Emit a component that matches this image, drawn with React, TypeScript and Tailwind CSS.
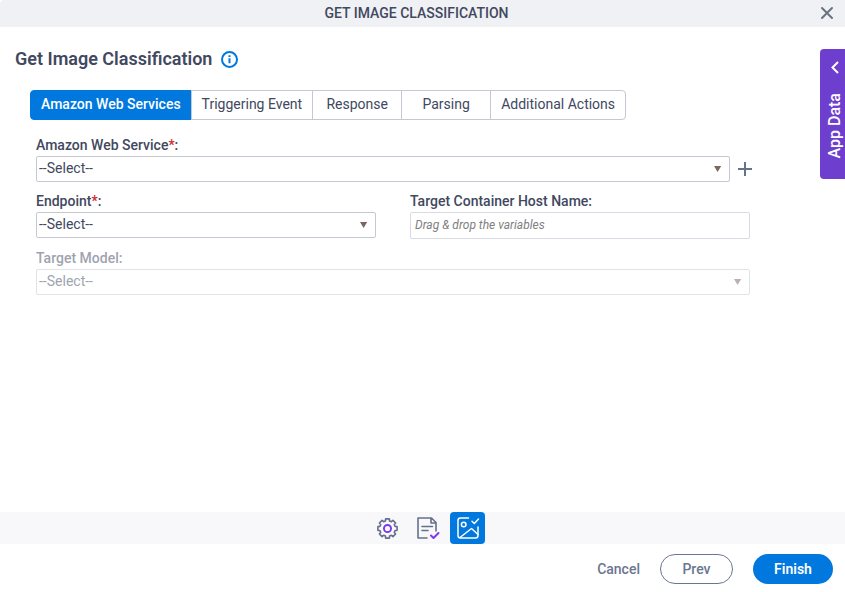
import { useState } from "react";
import type { ReactNode } from "react";

const tabs = [
  { id: "aws", label: "Amazon Web Services" },
  { id: "trigger", label: "Triggering Event" },
  { id: "response", label: "Response" },
  { id: "parsing", label: "Parsing" },
  { id: "actions", label: "Additional Actions" },
];

interface SelectFieldProps {
  id: string;
  label: string;
  required?: boolean;
  disabled?: boolean;
  action?: ReactNode;
}

function SelectField({ id, label, required, disabled, action }: SelectFieldProps) {
  return (
    <div className={disabled ? "opacity-50" : ""}>
      <label htmlFor={id} className="block h-5 font-medium leading-[18px]">
        {label}
        {required && <span className="text-[#d22630]">*</span>}:
      </label>
      <div className="flex items-center gap-2">
        <div className="relative flex-1">
          <select
            id={id}
            disabled={disabled}
            className="block h-[26px] w-full appearance-none rounded-xs border border-[#c5c8d3] bg-white pl-0.5 pr-6 pb-0.5 text-sm leading-5 opacity-100"
          >
            <option>--Select--</option>
          </select>
          <svg
            className="pointer-events-none absolute right-2 top-2.5 h-[6px] w-2 text-[#7b6663]"
            viewBox="0 0 8 6"
            fill="currentColor"
          >
            <path d="M0 0h7.200L3.600 6z" />
          </svg>
        </div>
        {action}
      </div>
    </div>
  );
}

// Outline of an eight-tooth cog centred on 12,12
const gearPoints = Array.from({ length: 8 }, (_, i) => i * 45)
  .flatMap((angle) => [
    [angle - 15, 8.2],
    [angle - 11, 10.2],
    [angle + 11, 10.2],
    [angle + 15, 8.2],
  ])
  .map(([angle, r]) => {
    const rad = (angle * Math.PI) / 180;
    return `${(12 + r * Math.cos(rad)).toFixed(2)},${(12 + r * Math.sin(rad)).toFixed(2)}`;
  })
  .join(" ");

function GearIcon() {
  return (
    <svg className="h-[23px] w-[23px]" viewBox="0 0 24 24" fill="none" strokeLinejoin="round">
      <polygon points={gearPoints} stroke="#64708c" strokeWidth="1.700" />
      <circle cx="12" cy="12" r="3.700" stroke="#7c3aed" strokeWidth="2" />
    </svg>
  );
}

function DocumentIcon() {
  return (
    <svg className="h-6 w-6" viewBox="0 0 24 24" fill="none" strokeWidth="1.600" strokeLinecap="round" strokeLinejoin="round">
      <path stroke="#64708c" d="M11 22H2V2h13.500l4.500 4.500V15M15 2v5h5M6 10.500h10.500M6 14.500h6" />
      <path stroke="#7c3aed" strokeWidth="2" d="M15 19.500l2.500 2.500 5-5" />
    </svg>
  );
}

function ImageCheckIcon() {
  return (
    <svg className="h-6 w-6" viewBox="0 0 24 24" fill="none" stroke="white" strokeWidth="1.500" strokeLinecap="round" strokeLinejoin="round">
      <path d="M12.500 2H4.500A2.500 2.500 0 0 0 2 4.500v15A2.500 2.500 0 0 0 4.500 22h15a2.500 2.500 0 0 0 2.500-2.500V11" />
      <circle cx="7.700" cy="8.500" r="2.300" />
      <path d="M4 21.500L15.500 12.500l6.500 6M16 5.200l2.300 2.300L22.500 3" />
    </svg>
  );
}

const steps = [
  { id: "settings", label: "Settings", icon: <GearIcon /> },
  { id: "details", label: "Details", icon: <DocumentIcon /> },
  { id: "image", label: "Image classification", icon: <ImageCheckIcon /> },
];

export default function App() {
  const [activeTab, setActiveTab] = useState("aws");
  const [activeStep, setActiveStep] = useState("image");

  return (
    <div className="relative flex min-h-screen flex-col bg-white font-['Roboto',sans-serif] text-sm text-[#414860]">
      {/* Title bar */}
      <header className="relative flex h-[27px] justify-center rounded-tl bg-[#f0f1f4]">
        <span className="pr-3 font-medium leading-[26px]">GET IMAGE CLASSIFICATION</span>
        <button aria-label="Close" className="absolute right-2.5 top-[5px] h-4 w-4 text-[#6b7280]">
          <svg className="h-4 w-4" viewBox="0 0 16 16" fill="none" stroke="currentColor" strokeWidth="2" strokeLinecap="round">
            <path d="M3 3l10 10M13 3L3 13" />
          </svg>
        </button>
      </header>

      {/* App data drawer handle */}
      <button className="absolute right-0 top-[49px] flex h-[130px] w-[25px] flex-col items-center gap-4 rounded-l bg-[#6e3fce] pl-1 pt-3 text-base font-medium leading-5 text-white">
        <svg className="h-4 w-3" viewBox="0 0 12 16" fill="none" stroke="currentColor" strokeWidth="2">
          <path d="M9 1L3.500 6.500 9 12" />
        </svg>
        <span className="rotate-180 [writing-mode:vertical-rl]">App Data</span>
      </button>

      <main className="flex-1">
        <div className="flex items-center gap-2 pl-[15px] pt-5">
          <h1 className="text-lg font-semibold leading-6">Get Image Classification</h1>
          <button aria-label="Information" className="text-[#0078de]">
            <svg className="h-[19px] w-[19px]" viewBox="0 0 19 19" fill="none" stroke="currentColor" strokeWidth="2">
              <circle cx="9.500" cy="9.500" r="7.500" />
              <path d="M9.500 8.300v5M9.500 5.300v1.800" />
            </svg>
          </button>
        </div>

        {/* Tabs */}
        <div role="tablist" className="ml-[30px] mt-[19px] flex">
          {tabs.map((tab) => (
            <button
              key={tab.id}
              role="tab"
              aria-selected={activeTab === tab.id}
              onClick={() => setActiveTab(tab.id)}
              className={`-mr-px h-[30px] min-w-[90px] whitespace-nowrap border px-2.5 pb-0.5 first:rounded-l last:rounded-r ${
                activeTab === tab.id
                  ? "border-[#0078de] bg-[#0078de] font-medium text-white"
                  : "border-[#c5c8d3] border-l-transparent bg-white bg-clip-padding not-first:border-l-[#c5c8d3]"
              }`}
            >
              {tab.label}
            </button>
          ))}
        </div>

        <form className="flex flex-col gap-2.5 pl-9 pr-[93px] pt-4">
          <SelectField
            id="service"
            label="Amazon Web Service"
            required
            action={
              <button type="button" aria-label="Add service" className="text-[#64748b]">
                <svg className="h-3.5 w-3.5" viewBox="0 0 14 14" fill="none" stroke="currentColor" strokeWidth="2">
                  <path d="M7 0v14M0 7h14" />
                </svg>
              </button>
            }
          />
          <div className="grid grid-cols-2 gap-[34px] pr-0.5">
            <SelectField id="endpoint" label="Endpoint" required />
            <div>
              <label htmlFor="host" className="block h-5 font-medium leading-[18px]">
                Target Container Host Name:
              </label>
              <input
                id="host"
                type="text"
                placeholder="Drag & drop the variables"
                className="block h-[27px] w-full rounded-xs border border-[#d9dae3] px-1 pb-0.5 text-xs italic placeholder:text-[#808080]"
              />
            </div>
          </div>
          <div className="pr-0.5">
            <SelectField id="model" label="Target Model" disabled />
          </div>
        </form>
      </main>

      {/* Wizard steps */}
      <nav className="flex h-8 items-stretch justify-center gap-[5px] bg-[#f8f8fb] pl-[10px]">
        {steps.map((step) => (
          <button
            key={step.id}
            aria-label={step.label}
            onClick={() => setActiveStep(step.id)}
            className={`flex w-[35px] items-center justify-center rounded ${
              activeStep === step.id ? "bg-[#0078de]" : ""
            }`}
          >
            {step.icon}
          </button>
        ))}
      </nav>

      <footer className="flex h-12 items-start justify-end gap-5 pr-3 pt-2.5 font-medium">
        <button className="h-[30px] text-[#6b7690]">Cancel</button>
        <button className="h-[30px] w-[73px] rounded-full border border-[#6b7690] text-[#6b7690]">Prev</button>
        <button className="h-[30px] w-20 rounded-full bg-[#0078de] font-semibold text-white">Finish</button>
      </footer>
    </div>
  );
}
